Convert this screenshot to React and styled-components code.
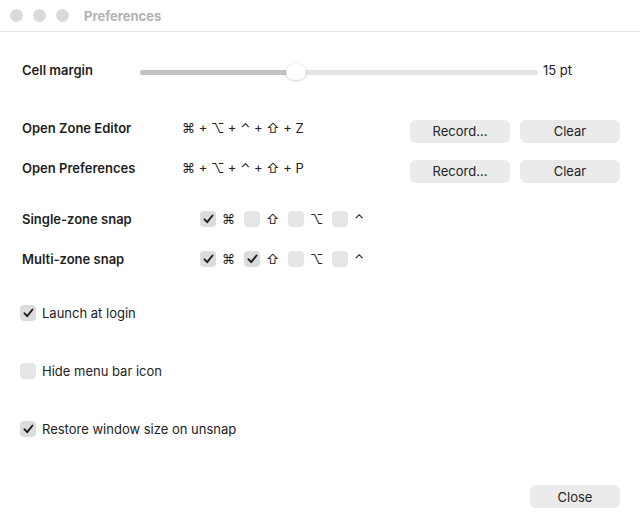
import styled, { createGlobalStyle } from 'styled-components';

const Global = createGlobalStyle`
  html, body {
    margin: 0;
    padding: 0;
    background: #fff;
  }
  body {
    font-family: Inter, "Noto Sans", "Liberation Sans", sans-serif;
    color: #222;
    -webkit-font-smoothing: antialiased;
  }
`

const Window = styled.div`
  width: 640px;
  height: 532px;
  display: flex;
  flex-direction: column;
  background: #fff;
  box-sizing: border-box;
`

const TitleBar = styled.div`
  height: 31px;
  border-bottom: 1px solid #e6e6e6;
  display: flex;
  align-items: center;
  padding-left: 10px;
  gap: 10px;
  flex-shrink: 0;
`

const Dot = styled.span`
  width: 13px;
  height: 13px;
  border-radius: 50%;
  background: #dadada;
`

const Title = styled.div`
  margin-left: 5px;
  font-size: 13px;
  font-weight: 700;
  color: #b3b3b3;
`

const Body = styled.div`
  flex: 1;
  display: flex;
  flex-direction: column;
  padding: 0 20px 0 22px;
`

const Row = styled.div`
  display: flex;
  align-items: center;
  height: ${p => p.h || 24}px;
  margin-top: ${p => p.mt || 0}px;
`

const Label = styled.div`
  width: ${p => p.w || 160}px;
  flex-shrink: 0;
  font-size: 13px;
  font-weight: 600;
  color: #1e1e1e;
  padding-bottom: ${p => p.pb || 0}px;
`

const SliderWrap = styled.div`
  position: relative;
  width: 398px;
  margin-left: -42px;
  height: 20px;
  display: flex;
  align-items: center;
`

const Track = styled.div`
  width: 100%;
  height: 5px;
  border-radius: 3px;
  background: #e4e4e4;
  overflow: hidden;
`

const Fill = styled.div`
  height: 100%;
  background: #c2c2c2;
`

const Knob = styled.div`
  position: absolute;
  top: 2px;
  width: 20px;
  height: 16px;
  margin-left: -10px;
  border-radius: 8px;
  background: #fff;
  box-shadow: 0 1px 3px rgba(0,0,0,0.16), 0 0 0 0.5px rgba(0,0,0,0.06);
`

const Value = styled.div`
  margin-left: 5px;
  font-size: 13px;
  color: #222;
  padding-bottom: 4px;
`

const Keys = styled.div`
  flex: 1;
  font-size: 13px;
  color: #222;
  padding-bottom: 6px;
`

const Button = styled.button`
  width: ${p => p.w || 100}px;
  height: 23px;
  border: none;
  border-radius: 6px;
  background: #ebebeb;
  font-family: inherit;
  font-size: 13px;
  color: #222;
  padding: 0;
  margin-left: ${p => p.ml || 0}px;
`

const Box = styled.span`
  width: 16px;
  height: 16px;
  border-radius: 4px;
  background: ${p => (p.on ? '#dcdcdc' : '#e6e6e6')};
  display: inline-flex;
  align-items: center;
  justify-content: center;
  flex-shrink: 0;
`

const Mods = styled.div`
  display: flex;
  align-items: center;
  margin-left: 18px;
`

const Mod = styled.div`
  display: flex;
  align-items: center;
  width: 44px;
  font-size: 13px;
  color: #222;
  span.g {
    margin-left: 6px;
  }
`

const CheckRow = styled.label`
  display: flex;
  align-items: center;
  gap: 6px;
  margin-left: -2px;
  height: 20px;
  margin-top: ${p => p.mt}px;
  font-size: 13px;
  color: #222;
`

const Footer = styled.div`
  display: flex;
  justify-content: flex-end;
  margin-top: auto;
  margin-bottom: 24px;
`

function Check() {
  return (
    <svg width="11" height="10" viewBox="0 0 11 10">
      <path d="M1.5 5.3 L4.2 8.2 L9.5 1.5" fill="none" stroke="#1c1c1c" strokeWidth="1.9" strokeLinecap="round" strokeLinejoin="round" />
    </svg>
  )
}

function CheckBox({ on }) {
  return <Box on={on ? 1 : 0}>{on && <Check />}</Box>
}

function ModSet({ values }) {
  const glyphs = ['⌘', '⇧', '⌥', '⌃']
  return (
    <Mods>
      {glyphs.map((g, i) => (
        <Mod key={g}>
          <CheckBox on={values[i]} />
          <span className="g">{g}</span>
        </Mod>
      ))}
    </Mods>
  )
}

export default function App() {
  const pct = (296 - 140) / 398 * 100
  return (
    <Window>
      <Global />
      <TitleBar>
        <Dot /><Dot /><Dot />
        <Title>Preferences</Title>
      </TitleBar>
      <Body>
        <Row h={24} mt={28}>
          <Label pb={4}>Cell margin</Label>
          <SliderWrap>
            <Track><Fill style={{ width: pct + '%' }} /></Track>
            <Knob style={{ left: pct + '%' }} />
          </SliderWrap>
          <Value>15 pt</Value>
        </Row>
        <Row h={24} mt={35}>
          <Label pb={6}>Open Zone Editor</Label>
          <Keys>⌘ + ⌥ + ⌃ + ⇧ + Z</Keys>
          <Button>Record...</Button>
          <Button ml={10}>Clear</Button>
        </Row>
        <Row h={24} mt={16}>
          <Label pb={6}>Open Preferences</Label>
          <Keys>⌘ + ⌥ + ⌃ + ⇧ + P</Keys>
          <Button>Record...</Button>
          <Button ml={10}>Clear</Button>
        </Row>
        <Row h={20} mt={26}>
          <Label>Single-zone snap</Label>
          <ModSet values={[true, false, false, false]} />
        </Row>
        <Row h={20} mt={20}>
          <Label>Multi-zone snap</Label>
          <ModSet values={[true, true, false, false]} />
        </Row>
        <CheckRow mt={34}><CheckBox on /> Launch at login</CheckRow>
        <CheckRow mt={38}><CheckBox /> Hide menu bar icon</CheckRow>
        <CheckRow mt={38}><CheckBox on /> Restore window size on unsnap</CheckRow>
        <Footer>
          <Button w={90}>Close</Button>
        </Footer>
      </Body>
    </Window>
  )
}
